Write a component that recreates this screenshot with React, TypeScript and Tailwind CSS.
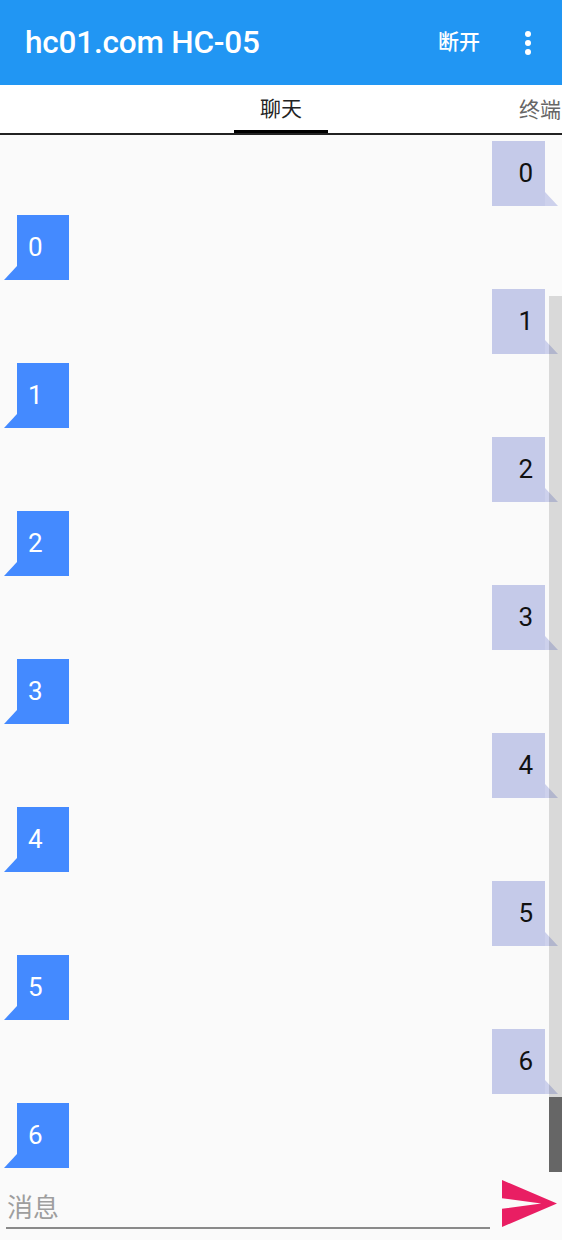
const font = "font-['Roboto','Noto_Sans_CJK_SC',sans-serif]";

function LeftBubble({ text }: { text: string }) {
  return (
    <div className="flex items-end pl-[4px]">
      {/* tail */}
      <svg width="13" height="14" viewBox="0 0 13 14" className="block">
        <polygon points="13,0 0,14 13,14" fill="#448AFF" />
      </svg>
      <div className="w-[52px] h-[65px] bg-[#448AFF] flex items-center pl-[11px] text-white text-[26px] leading-none">
        {text}
      </div>
    </div>
  );
}

function RightBubble({ text }: { text: string }) {
  return (
    <div className="flex items-end justify-end pr-[4px]">
      <div className="w-[53px] h-[65px] bg-[#C5CAE9] flex items-center justify-end pr-[12px] text-[#111] text-[26px] leading-none">
        {text}
      </div>
      {/* tail */}
      <svg width="13" height="14" viewBox="0 0 13 14" className="block">
        <polygon points="0,0 13,14 0,14" fill="#CDD1EC" />
      </svg>
    </div>
  );
}

export default function App() {
  const nums = ['0', '1', '2', '3', '4', '5', '6'];

  return (
    <div className={`${font} relative w-[562px] h-[1240px] bg-[#FAFAFA] flex flex-col overflow-hidden`}>
      {/* App bar */}
      <div className="h-[85px] bg-[#2196F3] flex items-center text-white shrink-0">
        <span className="ml-[25px] text-[31.5px] font-medium tracking-[-0.2px]">hc01.com HC-05</span>
        <span className="ml-auto text-[21px] font-medium">断开</span>
        {/* overflow menu */}
        <svg className="ml-[44px] mr-[30px]" width="8" height="26" viewBox="0 0 8 26">
          <circle cx="4" cy="4" r="3" fill="white" />
          <circle cx="4" cy="13" r="3" fill="white" />
          <circle cx="4" cy="22" r="3" fill="white" />
        </svg>
      </div>

      {/* Tabs */}
      <div className="shrink-0 bg-white">
        <div className="h-[48px] flex items-stretch overflow-hidden whitespace-nowrap">
          <div className="ml-[234px] w-[94px] flex items-center justify-center pt-[4px] border-b-[3px] border-black text-[21px] text-[#222]">
            聊天
          </div>
          <div className="ml-[191px] flex items-center pt-[4px] text-[21px] text-[#666]">终端</div>
        </div>
        <div className="h-[1.5px] bg-[#222]" />
      </div>

      {/* Messages */}
      <div className="flex-1 flex flex-col gap-[9px] pt-[6px] overflow-hidden">
        {nums.map((n) => (
          <div key={n} className="flex flex-col gap-[9px]">
            <RightBubble text={n} />
            <LeftBubble text={n} />
          </div>
        ))}
      </div>

      {/* Input row */}
      <div className="h-[68px] shrink-0 flex items-start pt-[8px]">
        <div className="ml-[6px] w-[484px] h-[49px] border-b-2 border-[#8a8a8a] flex items-center pt-[10px] pl-[1px] text-[26px] text-[#9E9E9E]">
          消息
        </div>
        <svg className="ml-[12px]" width="55" height="47" viewBox="2 3 21 18" preserveAspectRatio="none">
          <path d="M2.01 21L23 12 2.01 3 2 10l15 2-15 2z" fill="#E91E63" />
        </svg>
      </div>

      {/* Scrollbar overlay */}
      <div className="absolute right-0 top-[296px] w-[13px] h-[801px] bg-black/[0.13]" />
      <div className="absolute right-0 top-[1097px] w-[13px] h-[75px] bg-[#666]" />
    </div>
  );
}
